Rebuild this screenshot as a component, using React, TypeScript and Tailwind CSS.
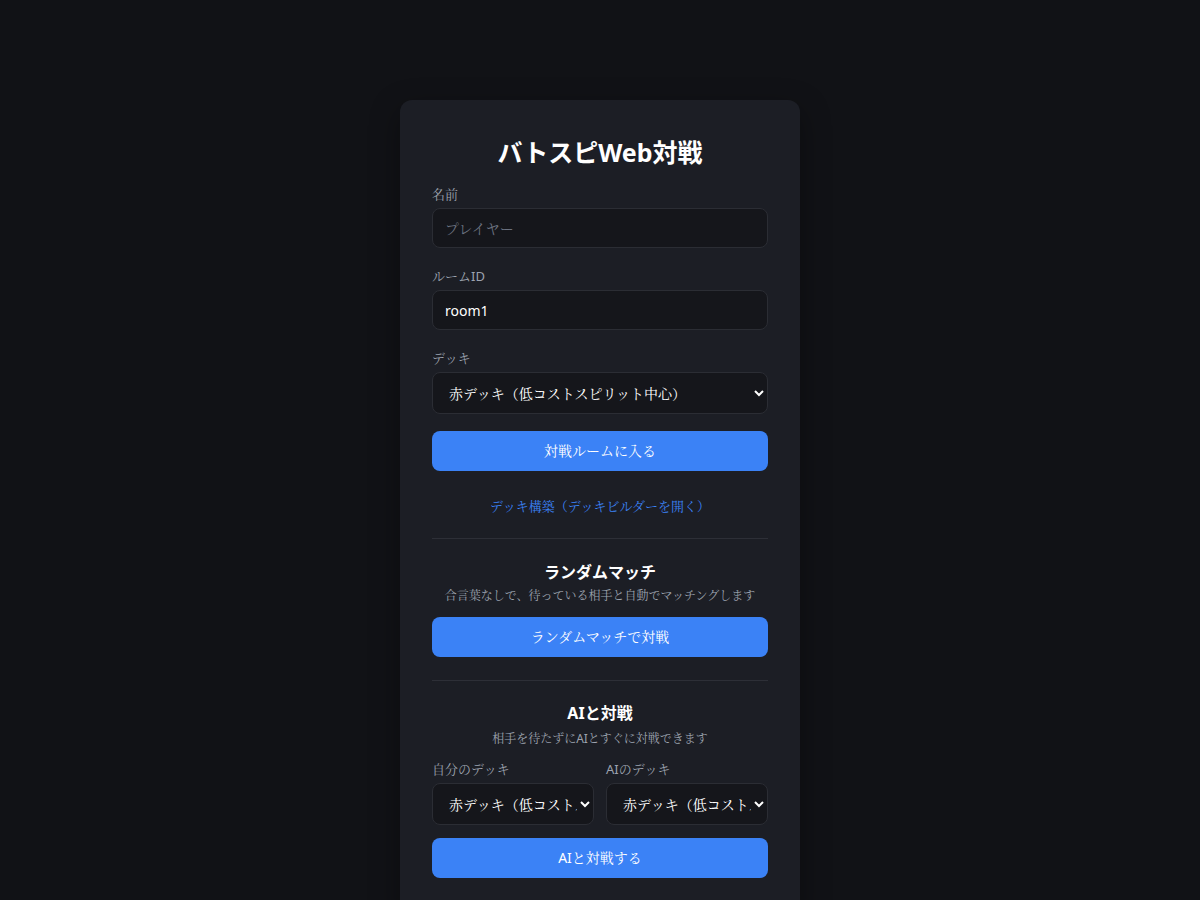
import React from "react";

const deck = "赤デッキ（低コストスピリット中心）";
const body = "font-['Noto_Sans','Noto_Serif_CJK_JP',serif]";
const head = "font-['Noto_Sans','Noto_Sans_CJK_JP',sans-serif] font-bold text-white text-center";
const field =
  "rounded-lg border border-[#2b2d34] bg-[#15161b] text-white outline-none";

export default function App() {
  return (
    <div className={`min-h-[900px] bg-[#111216] [color-scheme:dark] pt-[100px] ${body}`}>
      <div className="mx-auto w-[400px] rounded-xl bg-[#1c1e25] px-8 pt-8 pb-10 text-[#e5e7eb] shadow-[0_10px_30px_rgba(0,0,0,0.35)]">
        <h1 className={`${head} text-[25px] leading-10`}>バトスピWeb対戦</h1>
        <div className="mt-3 flex flex-col">
          <label className="mb-1 text-[13px] leading-5 text-[#9ca3af]">名前</label>
          <input
            placeholder="プレイヤー"
            className={`${field} h-10 px-3 text-sm placeholder:text-[#6b7280]`}
          />
          <label className="mt-[18px] mb-1 text-[13px] leading-5 text-[#9ca3af]">ルームID</label>
          <input defaultValue="room1" className={`${field} h-10 px-3 text-sm`} />
          <label className="mt-[18px] mb-1 text-[13px] leading-5 text-[#9ca3af]">デッキ</label>
          <select className={`${field} h-[42px] pl-3 pr-1 text-sm`}>
            <option>{deck}</option>
          </select>
          <button className="mt-[17px] h-10 rounded-lg bg-[#3b82f6] text-sm text-white">対戦ルームに入る</button>
          <div className="mt-[25px] text-center text-[13px] leading-5 text-[#3b82f6]">デッキ構築（デッキビルダーを開く）</div>
          <div className="mt-[22px] h-px bg-[#2d2f37]" />
          <div className={`${head} mt-[21px] text-base leading-6`}>ランダムマッチ</div>
          <div className="mt-[2px] text-center text-xs leading-5 text-[#9ca3af]">合言葉なしで、待っている相手と自動でマッチングします</div>
          <button className="mt-[11px] h-10 rounded-lg bg-[#3b82f6] text-sm text-white">ランダムマッチで対戦</button>
          <div className="mt-[23px] h-px bg-[#2d2f37]" />
          <div className={`${head} mt-5 text-base leading-6`}>AIと対戦</div>
          <div className="mt-1 text-center text-xs leading-5 text-[#9ca3af]">相手を待たずにAIとすぐに対戦できます</div>
          <div className="mt-[10px] grid grid-cols-2 gap-3">
            <div className="flex min-w-0 flex-col">
              <label className="mb-1 text-[13px] leading-5 text-[#9ca3af]">自分のデッキ</label>
              <select className={`${field} h-[42px] min-w-0 pl-3 pr-0 text-sm`}>
                <option>{deck}</option>
              </select>
            </div>
            <div className="flex min-w-0 flex-col">
              <label className="mb-1 text-[13px] leading-5 text-[#9ca3af]">AIのデッキ</label>
              <select className={`${field} h-[42px] min-w-0 pl-3 pr-0 text-sm`}>
                <option>{deck}</option>
              </select>
            </div>
          </div>
          <button className="mt-[13px] h-10 rounded-lg bg-[#3b82f6] text-sm text-white">AIと対戦する</button>
        </div>
      </div>
    </div>
  );
}
